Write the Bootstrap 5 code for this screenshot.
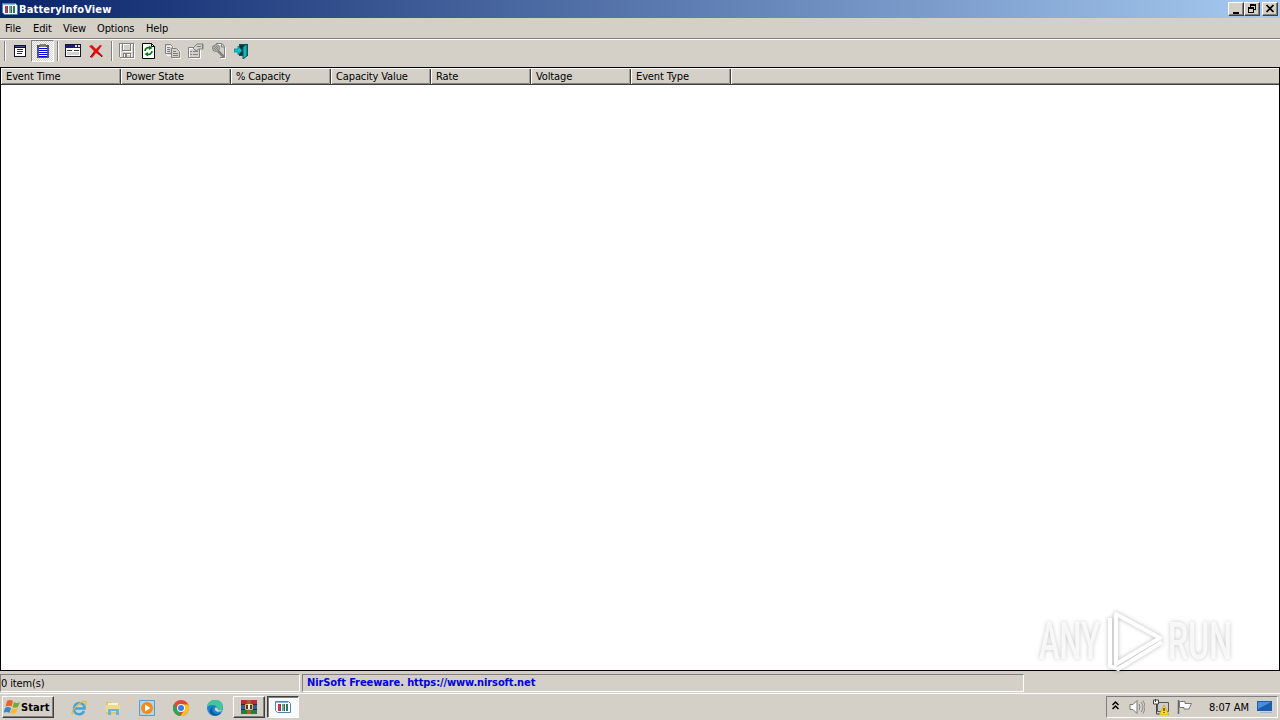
<!DOCTYPE html>
<html lang="en">
<head>
  <meta charset="UTF-8">
  <title>BatteryInfoView</title>
  <link href="https://cdn.jsdelivr.net/npm/bootstrap@5.3.0/dist/css/bootstrap.min.css" rel="stylesheet">
  <style>
    body {
      width: 1280px;
      height: 720px;
      background: #d4d0c8;
      color: #000;
      font: 11px/13px "DejaVu Sans Condensed", "DejaVu Sans", sans-serif;
      letter-spacing: -0.12px;
      cursor: default;
    }
    svg { display: block; flex: none; }
    .titlebar { height: 18px; background: linear-gradient(90deg, #0a246a, #a6caf0); padding: 0 2px; }
    .titlebar-text { color: #fff; font-weight: bold; letter-spacing: 0.15px; margin-left: 1px; }
    .win-btn {
      width: 16px;
      height: 14px;
      background: #d4d0c8;
      border: 1px solid;
      border-color: #fff #404040 #404040 #fff;
      box-shadow: inset -1px -1px #808080;
      padding: 0;
      border-radius: 0;
    }
    .win-btn.close-btn { margin-left: 2px; }
    .menubar { height: 21px; border-bottom: 1px solid #808080; padding: 1px 0 0 5px; }
    .menubar a { color: #000; text-decoration: none; }
    .menu-file { width: 28px; }
    .menu-edit { width: 30px; }
    .menu-view { width: 34px; }
    .menu-options { width: 49px; }
    .toolbar { height: 28px; border-top: 1px solid #fff; padding: 0 0 5px 4px; }
    .tool-btn { width: 23px; height: 22px; padding: 3px 0 0 4px; }
    .tool-btn.pressed {
      border: 1px solid;
      border-color: #808080 #fff #fff #808080;
      background: repeating-conic-gradient(#fff 0 25%, #d4d0c8 0 50%) 0 0 / 2px 2px;
      padding: 2px 0 0 3px;
    }
    .groove { width: 2px; height: 20px; border-left: 1px solid #808080; border-right: 1px solid #fff; }
    .groove-first { margin-right: 2px; }
    .groove-mid { margin: 0 2px 0 3px; }
    .groove-last { margin: 0 2px 0 4px; }
    .list-view { height: 604px; border: 1px solid #000; background: #fff; }
    .list-head { height: 17px; background: #d4d0c8; border-top: 1px solid #fff; border-bottom: 1px solid #404040; box-shadow: inset 0 -1px #808080; }
    .list-head div { border-left: 1px solid #fff; border-right: 1px solid #404040; box-shadow: inset -1px 0 #a09d97; padding: 2px 0 0 4px; white-space: nowrap; line-height: 12px; }
    .list-head div:last-child { border-right: 0; box-shadow: none; }
    .list-head div:first-child { border-left-color: #fff; }
    .w-100px { width: 100px; }
    .w-110px { width: 110px; }
    .w-120px { width: 120px; }
    .statusbar { height: 22px; padding-top: 3px; gap: 2px; }
    .pane { height: 18px; border: 1px solid; border-color: #808080 #fff #fff #808080; }
    .pane-count { width: 300px; padding-top: 2px; }
    .pane-link { width: 722px; padding: 1px 0 0 4px; color: #0000e0; font-weight: bold; letter-spacing: -0.1px; }
    .taskbar { height: 27px; border-top: 1px solid #fff; padding: 2px 2px 0 2px; }
    .task-btn {
      height: 22px;
      border: 1px solid;
      border-color: #fff #404040 #404040 #fff;
      box-shadow: inset -1px -1px #808080;
    }
    .task-btn.active { border-color: #404040 #fff #fff #404040; box-shadow: inset 1px 1px #808080; background: #fafafa; margin-left: 2px; }
    .start { width: 52px; font-weight: bold; padding-left: 1px; letter-spacing: 0.1px; }
    .quick { width: 179px; padding-left: 17px; gap: 18px; }
    .task-item { width: 32px; }
    .tray { width: 172px; height: 22px; border: 1px solid; border-color: #808080 #fff #fff #808080; padding-left: 4px; }
    .watermark { position: absolute; left: 1030px; top: 602px; filter: drop-shadow(0 0 2px rgba(0, 0, 0, .28)); }
    .watermark text { font-family: Roboto, sans-serif; font-size: 51px; font-weight: 500; letter-spacing: 0; }
  </style>
</head>
<body class="d-flex flex-column overflow-hidden">
  <svg width="0" height="0" class="d-none">
    <symbol id="battery" viewBox="0 0 16 16">
      <path d="M.5 2.500h13l2 2v9h-13l-2-2z" fill="#fff" stroke="#4e83b8"/>
      <path d="M1 3h12v1H1z" fill="#8ab6e0"/>
      <path d="M3 5h2v7H3z" fill="#d72c54"/>
      <path d="M7 5h2v7H7z" fill="#5cb87c"/>
      <path d="M11 5h2v7h-2z" fill="#267d50"/>
      <path d="M5.500 5v7M9.500 5v7" stroke="#5a4c70"/>
    </symbol>
  </svg>

  <!-- Title bar -->
  <div class="titlebar d-flex align-items-center flex-shrink-0">
    <svg width="16" height="16"><use href="#battery"/></svg>
    <span class="titlebar-text me-auto">BatteryInfoView</span>
    <div class="win-btn"><svg width="14" height="12"><path d="M4 9h6v2H4z"/></svg></div>
    <div class="win-btn"><svg width="14" height="12" shape-rendering="crispEdges"><path d="M5 1h6v6H9V6h1V3H6v1H5zM3 4h6v6H3zm1 2v3h4V6z" fill-rule="evenodd"/></svg></div>
    <div class="win-btn close-btn"><svg width="14" height="12"><path d="M3.500 2l7 7M10.500 2l-7 7" stroke="#000" stroke-width="1.700"/></svg></div>
  </div>

  <!-- Menu -->
  <nav class="menubar d-flex align-items-center flex-shrink-0">
    <a href="#" class="menu-file">File</a>
    <a href="#" class="menu-edit">Edit</a>
    <a href="#" class="menu-view">View</a>
    <a href="#" class="menu-options">Options</a>
    <a href="#">Help</a>
  </nav>

  <!-- Toolbar -->
  <div class="toolbar d-flex align-items-center flex-shrink-0">
    <div class="groove groove-first"></div>
    <div class="tool-btn">
      <svg width="16" height="16" shape-rendering="crispEdges"><path d="M2 2h12v12H2z" fill="#101030"/><path d="M3 5h10v8H3z" fill="#fff"/><path d="M3 3h10v1H3z" fill="#4848a0"/><path d="M5 6h6v1H5zm0 2h6v1H5zm0 2h5v1H5z" fill="#333"/></svg>
    </div>
    <div class="tool-btn pressed">
      <svg width="16" height="16" shape-rendering="crispEdges"><path d="M2 2h12v13H2z" fill="#55557a"/><path d="M4 4h8v10H4z" fill="#fff"/><path d="M5 1h6v3H5z" fill="#858060"/><path d="M4 5h8v1H4zm0 2h8v1H4zm0 2h8v1H4zm0 2h8v1H4zm0 2h8v1H4z" fill="#0000d8"/></svg>
    </div>
    <div class="groove groove-mid"></div>
    <div class="tool-btn">
      <svg width="16" height="16" shape-rendering="crispEdges"><path d="M0 1h16v13H0z" fill="#17172c"/><path d="M1 2h14v3H1z" fill="#1b1b82"/><path d="M10 2h2v2h-2zM13 2h2v2h-2z" fill="#ddd"/><path d="M1 5h14v8H1z" fill="#fff"/><path d="M2 7h5v1H2zm7 0h5v1H9z" fill="#333"/><path d="M2 9h12v3H2z" fill="#d4d0c8"/></svg>
    </div>
    <div class="tool-btn">
      <svg width="16" height="16"><path d="M1 3l3-1 4 4 4-4 2 .5L10 8l5 5-1 1-6-4-4 5-2-1 4-6z" fill="#e01010"/><path d="M2 14l4-4M10 10l4 4" stroke="#7c1010"/></svg>
    </div>
    <div class="groove groove-last"></div>
    <div class="tool-btn">
      <svg width="16" height="16" shape-rendering="crispEdges" fill="none"><path d="M1.500 1.500h14v14h-13l-1-1zM4.500 2v6h8V2M5.500 15v-4h7v4" stroke="#fff"/><path d="M.5.5h14v14h-13l-1-1zM3.500 1v6h8V1M4.500 14v-4h7v4" stroke="#808080"/><path d="M6 11h2v3H6z" fill="#808080"/></svg>
    </div>
    <div class="tool-btn">
      <svg width="16" height="16"><path d="M.5.5h9l3 3v12H.5z" fill="#fff" stroke="#000"/><path d="M9.500.5v3h3" fill="none" stroke="#000"/><path d="M3 8c0-3 3-4 5-3M10 8c0 3-3 4-5 3" fill="none" stroke="#087818" stroke-width="1.700"/><path d="M7 2.500L10.500 5 7 7zM6 9l-3.500 2L6 13.500z" fill="#087818"/></svg>
    </div>
    <div class="tool-btn">
      <svg width="16" height="16" fill="none"><path d="M1.500 2.500h5l2 2v7h-7zM7.500 5.500h5l3 3v6h-8z" stroke="#fff" transform="translate(.5 .8)"/><path d="M.5 1.500h5l2 2v7h-7z" stroke="#808080"/><path d="M6.500 5.500h5l3 3v6h-8z" fill="#d4d0c8" stroke="#808080"/><path d="M2 4.500h3M2 6.500h3M2 8.500h3M8 8.500h3M8 10.500h5M8 12.500h5" stroke="#808080"/></svg>
    </div>
    <div class="tool-btn">
      <svg width="16" height="16" fill="none"><path d="M1.500 5.500h11v10h-11z" stroke="#fff"/><path d="M.5 4.500h11v10H.5zM2 8.500h2M2 11.500h2M5 8.500h5M5 11.500h5" stroke="#808080"/><path d="M5 5l4-4h6v5h-4L8 8 6 6z" fill="#d4d0c8" stroke="#808080"/><path d="M9 3.500h4M14.500 1v5" stroke="#808080"/></svg>
    </div>
    <div class="tool-btn">
      <svg width="16" height="16" fill="none"><path d="M2.500 1.500h9l3 3v11M15 15.500h-5" stroke="#fff"/><path d="M5 .5h6l2.500 3v11H9M10.500 1v3h3" stroke="#808080"/><circle cx="5" cy="5" r="3.500" fill="#b8b5af" stroke="#808080"/><path d="M7 8l6 6" stroke="#808080" stroke-width="2.500"/><path d="M3 3l4 4M3 5l2 2M5 3l2 2" stroke="#808080"/></svg>
    </div>
    <div class="tool-btn">
      <svg width="16" height="16"><path d="M5 1h9v12H5z" fill="#0a5560"/><path d="M6 2h4v10H6z" fill="#103038"/><path d="M9 4l4-3v12l-4 3z" fill="#18b5b5" stroke="#075560"/><path d="M0 6h4V3l4 4.500L4 12V9H0z" fill="#00c9d2" stroke="#08717d" stroke-width=".7"/></svg>
    </div>
  </div>

  <!-- Event list -->
  <main class="list-view flex-shrink-0">
    <div class="list-head d-flex">
      <div class="w-120px">Event Time</div>
      <div class="w-110px">Power State</div>
      <div class="w-100px">% Capacity</div>
      <div class="w-100px">Capacity Value</div>
      <div class="w-100px">Rate</div>
      <div class="w-100px">Voltage</div>
      <div class="w-100px">Event Type</div>
      <div class="flex-grow-1"></div>
    </div>
  </main>

  <!-- Status bar -->
  <div class="statusbar d-flex flex-shrink-0">
    <div class="pane pane-count">0 item(s)</div>
    <div class="pane pane-link">NirSoft Freeware. https://www.nirsoft.net</div>
  </div>

  <!-- Taskbar -->
  <footer class="taskbar d-flex flex-shrink-0">
    <div class="task-btn start d-flex align-items-center">
      <svg width="17" height="16"><path d="M3 2q3-2 6 0L7.500 7.500Q5 6 1.500 7.500z" fill="#e86527"/><path d="M10 3q3 2 6 0l-2 5q-3 1.500-5.500 0z" fill="#76ac35"/><path d="M1 9q3-2 6 0l-1.500 5Q3 12-.5 14z" fill="#3687cc"/><path d="M8 9q3 2 6 0l-2 5q-3 1.500-5.500 0z" fill="#f7bd23"/></svg>
      <span>Start</span>
    </div>
    <div class="quick d-flex align-items-center">
      <svg width="16" height="16" fill="none"><path d="M4 8.500h9.500C14 1 3 1 3 9c0 6 8 7 10 2" stroke="#43a4dc" stroke-width="2.500"/><path d="M1.500 14.500C-1 11 11-1 15 2c.7 1 0 2-1 4" stroke="#e5b839" stroke-width="1.200"/></svg>
      <svg width="16" height="16"><path d="M1 2h5l1 2h7v10H1z" fill="#e3c469"/><path d="M3 3h10v5H3z" fill="#fff4c4"/><path d="M1 5h14v7H1z" fill="#f1da8c"/><path d="M3 15V9h11v6h-3v-4H6v4z" fill="#6bb4dc"/></svg>
      <svg width="16" height="16"><path d="M.5.5h15v15H.5z" fill="#b3d5ed" stroke="#579bd0"/><circle cx="8" cy="8" r="6" fill="#f08b17"/><path d="M6 4.500L11.500 8 6 11.500z" fill="#fff"/></svg>
      <svg width="16" height="16"><circle cx="8" cy="8" r="8" fill="#e64434"/><path d="M1 4l5 8 2 4A8 8 0 0 1 1 4z" fill="#2da653"/><path d="M8 4.500h7.200A8 8 0 0 1 7.500 16L12 9z" fill="#f8c51b"/><circle cx="8" cy="8" r="4" fill="#fff"/><circle cx="8" cy="8" r="3" fill="#397de4"/></svg>
      <svg width="16" height="16"><circle cx="8" cy="8" r="8" fill="#1686ce"/><path d="M0 7C1-2 16-3 16 7c0 4-4 5-6 3 2-4-4-7-10-3z" fill="#42c59b"/><path d="M6 7c-3 5 2 9 8 6-3 4-11 3-11-2 0-3 2-4 3-4z" fill="#125596"/><path d="M8 8c-1 3 3 5 7 3l1-1c-3 1-5 0-5.500-1 0-1-1.500-2-2.500-1z" fill="#d4d0c8"/></svg>
    </div>
    <div class="task-btn task-item d-flex align-items-center justify-content-center">
      <svg width="16" height="16"><path d="M0 1h16v5H0z" fill="#b52e36"/><path d="M0 6h16v5H0z" fill="#3c57a5"/><path d="M0 11h16v4H0z" fill="#267c40"/><path d="M0 5.500h16M0 10.500h16" stroke="#3d2432"/><path d="M6 1h4v14H6z" fill="#a7602c"/><path d="M4.500 5.500h7v5h-7z" fill="#5d3427" stroke="#e2b75d"/><path d="M7 5h2v5H7z" fill="#eee"/></svg>
    </div>
    <div class="task-btn task-item active d-flex align-items-center justify-content-center">
      <svg width="16" height="16"><use href="#battery"/></svg>
    </div>
    <div class="tray ms-auto d-flex align-items-center">
      <svg width="10" height="16"><path d="M2 6l3-3 3 3M2 10l3-3 3 3" transform="translate(-.5 0)" fill="none" stroke="#000" stroke-width="1.500"/></svg>
      <svg width="16" height="16" class="ms-2" fill="none"><path d="M1 5.500h3l4-4v13l-4-4H1z" fill="#fff" stroke="#777"/><path d="M10 5q2 3 0 6M12 3q4 5 0 10M14 1.500q4 6.500 0 13" stroke="#888"/></svg>
      <svg width="16" height="16" class="ms-2"><path d="M4.500 3.500h11v9h-11z" fill="#ccc" stroke="#555"/><path d="M.5 1h5v4h-5z" fill="#fff" stroke="#444"/><path d="M2.500 0v3M3.500 5v10h5" fill="none" stroke="#444"/><path d="M11 6l5 10H6z" fill="#ffd91c" stroke="#b99600" stroke-width=".6"/><path d="M10.500 9h1v3h-1zm0 4h1v1h-1z"/></svg>
      <svg width="16" height="16" class="ms-2"><path d="M1.500 1v14" stroke="#666" stroke-width="1.500"/><path d="M2.500 2.500H8v2h6.500L12 10H7V8.500H2.500z" fill="#fff" stroke="#777"/></svg>
      <span class="ms-3">8:07 AM</span>
      <svg width="16" height="16" class="ms-auto me-1"><path d="M0 2h15v10H0z" fill="#1c5db2"/><path d="M1 3h13L1 10z" fill="#4b8dd6"/><path d="M3 13h12v1H3z" fill="#9ab9d9"/></svg>
    </div>
  </footer>

  <!-- Overlay logo -->
  <svg class="watermark" width="240" height="75" fill="#fff" fill-opacity=".8">
    <text x="9" y="57" textLength="61" lengthAdjust="spacingAndGlyphs">ANY</text>
    <path d="M86 12l44 24-44 26zM80 16v48l8 3 44-27" fill="none" stroke="#fff" stroke-width="4" stroke-linejoin="round"/>
    <text x="138" y="57" textLength="64" lengthAdjust="spacingAndGlyphs">RUN</text>
  </svg>
</body>
</html>
